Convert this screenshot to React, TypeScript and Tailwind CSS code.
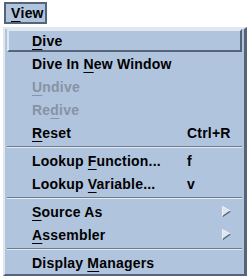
import React from 'react';

type Item =
    | { kind: 'sep' }
    | { kind: 'item'; label: string; mn: number; accel?: string; arrow?: boolean; disabled?: boolean; active?: boolean };

const items: Item[] = [
    { kind: 'item', label: 'Dive', mn: 0, active: true },
    { kind: 'item', label: 'Dive In New Window', mn: 8 },
    { kind: 'item', label: 'Undive', mn: 0, disabled: true },
    { kind: 'item', label: 'Redive', mn: 2, disabled: true },
    { kind: 'item', label: 'Reset', mn: 0, accel: 'Ctrl+R' },
    { kind: 'sep' },
    { kind: 'item', label: 'Lookup Function...', mn: 7, accel: 'f' },
    { kind: 'item', label: 'Lookup Variable...', mn: 7, accel: 'v' },
    { kind: 'sep' },
    { kind: 'item', label: 'Source As', mn: 0, arrow: true },
    { kind: 'item', label: 'Assembler', mn: 0, arrow: true },
    { kind: 'sep' },
    { kind: 'item', label: 'Display Managers', mn: 8 },
];

function Mnemonic({ text, index }: { text: string; index: number }) {
    return (
        <>
            {text.slice(0, index)}
            <span className="underline decoration-1 underline-offset-[3px]">{text.charAt(index)}</span>
            {text.slice(index + 1)}
        </>
    );
}

function Arrow() {
    return (
        <svg width="9" height="11" viewBox="0 0 9 11" className="block">
            <polygon points="0.5,0.5 8.5,5 0.5,10.5" fill="#dde5ef" />
            <polyline points="0.5,10.5 8.5,5" stroke="#56647a" strokeWidth="1.5" fill="none" />
            <polyline points="0.5,10.5 0.5,0.5 8.5,5" stroke="#eef2f7" strokeWidth="1" fill="none" />
        </svg>
    );
}

export default function App() {
    return (
        <div className="w-[247px] h-[276px] bg-white overflow-hidden font-['Liberation_Sans',Arial,sans-serif] font-bold text-[14px] tracking-[0.2px] text-black">
            {/* menu bar */}
            <div className="h-[27px] pt-[2px] pl-[4px]">
                <div className="w-[43px] h-[22px] bg-[#b0c4de] border-2 border-[#56647a] flex items-center pl-[5px] leading-none">
                    <Mnemonic text="View" index={0} />
                </div>
            </div>

            {/* pulldown */}
            <div className="ml-[3px] w-[244px] h-[249px] bg-[#b0c4de] border-t-2 border-l-2 border-t-[#dfe7f1] border-l-[#dfe7f1] border-r-[3px] border-b-[2px] border-r-[#56647a] border-b-[#56647a] px-[2px]">
                {items.map((it, i) =>
                    it.kind === 'sep' ? (
                        <div key={i} className="h-[5px] flex flex-col justify-center">
                            <div className="h-px bg-[#6d7b8c]" />
                            <div className="h-px bg-[#e4eaf2]" />
                        </div>
                    ) : (
                        <div
                            key={i}
                            className={`h-[23px] grid grid-cols-[155px_1fr] items-center leading-none ${
                                it.active
                                    ? 'border-t-2 border-l-2 border-t-[#dfe7f1] border-l-[#dfe7f1] border-r-2 border-b-2 border-r-[#56647a] border-b-[#56647a] pl-[23px]'
                                    : 'pl-[25px]'
                            } ${it.disabled ? 'text-[#8793a3]' : ''}`}
                        >
                            <span className="whitespace-nowrap">
                                <Mnemonic text={it.label} index={it.mn} />
                            </span>
                            <span className="flex items-center">
                                {it.accel}
                                {it.arrow && (
                                    <span className="pl-[35px]">
                                        <Arrow />
                                    </span>
                                )}
                            </span>
                        </div>
                    )
                )}
            </div>
        </div>
    );
}
